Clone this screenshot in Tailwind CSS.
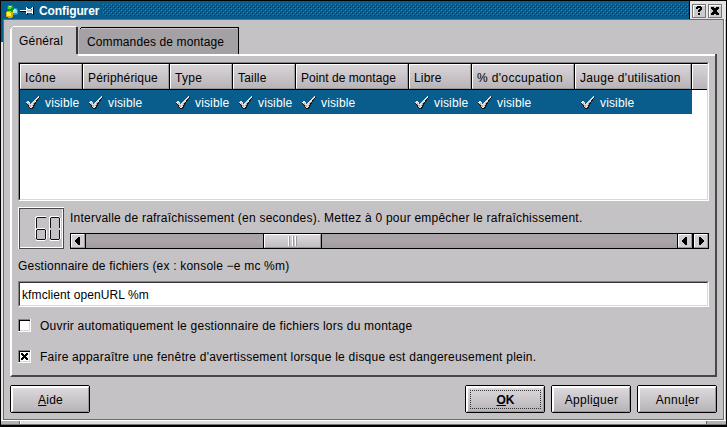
<!DOCTYPE html>
<html lang="fr">
<head>
<meta charset="utf-8">
<title>Configurer</title>
<script src="https://cdn.jsdelivr.net/npm/@tailwindcss/browser@4"></script>
</head>
<body class="w-[727px] h-[427px] overflow-hidden bg-black text-black font-['Liberation_Sans',Arial,sans-serif] text-[12px] leading-[14px] whitespace-nowrap cursor-default">
<svg class="hidden" shape-rendering="crispEdges">
  <symbol id="check" viewBox="0 0 15 15">
    <path d="M1 8h4v2h2V8h1V7h1V5h1V4h1V3h1V2h1V1h1v1h1v1h-1v1h-1v2h-1v1h-1v2h-1v2H9v2H8v1H5v-1H4v-1H3v-2H2V9H1z" fill="#181818"/>
    <path d="M1 7h1V6h2v1h1v2h1V8h1V7h1V6h1V5h1V4h1V3h1V2h1V1h1v2h-1v1h-1v1h-1v2h-1v1H9v2H8v2H7v1H5v-1H4v-2H3V9H2V8H1z" fill="#e2dee2"/>
    <path d="M3 8h1v2h2v2H5v-1H4v-1H3zM9 7h1v1H9v2H8v1H7v-1h1V8h1z" fill="#b0aab0"/>
  </symbol>
</svg>
<div class="w-[727px] h-[427px] flex flex-col border-t border-l border-r border-black">
  <!-- title bar -->
  <header class="h-[18px] flex shrink-0 bg-[#085d8c] text-white">
    <div class="w-[37px] flex shrink-0">
      <svg class="w-[37px] h-[18px]" viewBox="1 1 37 18" shape-rendering="crispEdges">
        <path d="M13 8h4v1h1v5h-1v1h-5v-1h-1v-3h2z" fill="#2898b8"/><path d="M13 9h3v1h1v3h-5v-1h1z" fill="#90e4f8"/><path d="M13 9h2v2h-2z" fill="#e0ffff"/>
        <path d="M8 5h5v1h1v4h-1v1H8v-1H7V6h1z" fill="#109820"/><path d="M8 6h4v2h-1v1H8z" fill="#48d848"/><path d="M9 6h2v1H9z" fill="#c0ffb0"/>
        <path d="M7 11h4v1h2v5h-1v1H8v-1H6v-5h1z" fill="#d8b000"/><path d="M7 12h3v1h1v3H7z" fill="#fff040"/>
        <path d="M20 11h7v1h-7zM27 7h1v8h-1zM28 12h5v1h-5zM33 7h1v8h-1z" fill="#000"/>
        <path d="M20 10h6v1h-6zM26 7h1v7h-1zM32 7h1v7h-1zM27 8h1v1h-1zM31 8h1v1h-1zM28 9h3v1h-3zM27 12h5v1h-5z" fill="#fff"/><path d="M27 9h1v3h-1zM28 10h4v2h-4z" fill="#c0c0c0"/>
      </svg>
    </div>
    <h1 class="pl-[1px] pt-[3px] w-[65px] shrink-0 font-bold tracking-[-0.1px]">Configurer</h1>
    <svg class="mt-[3px] w-[586px] h-[12px] shrink-0" shape-rendering="crispEdges"><defs><pattern id="grip" width="4" height="4" patternUnits="userSpaceOnUse"><path d="M0 0h1v1H0zM2 2h1v1H2z" fill="#2f8dc0"/><path d="M1 1h1v1H1zM3 3h1v1H3z" fill="#003858"/></pattern></defs><rect width="586" height="12" fill="url(#grip)"/></svg>
    <div class="flex grow gap-[2px] bg-[#e4e2e4] border-l border-black pt-[3px] pl-[2px]">
      <svg class="w-[14px] h-[14px]" viewBox="0 0 14 14" shape-rendering="crispEdges"><path d="M0 0h14v14H0z" fill="#777"/><path d="M1 1h12v12H1z" fill="#fff"/><path d="M2 2h11v11H2z" fill="#ccc9cc"/><path d="M4 4V3h1V2h4v1h1v3H9v1H8v1H6V6h1V5h1V4H6v1H4zM6 9h2v2H6z"/></svg>
      <svg class="w-[14px] h-[14px]" viewBox="0 0 14 14" shape-rendering="crispEdges"><path d="M0 0h14v14H0z" fill="#777"/><path d="M1 1h12v12H1z" fill="#fff"/><path d="M2 2h11v11H2z" fill="#ccc9cc"/><path d="M3 3h3v1h2V3h3v2h-1v1H9v2h1v1h1v2H8v-1H6v1H3V9h1V8h1V6H4V5H3z"/></svg>
    </div>
  </header>
  <div class="h-[401px] flex shrink-0">
    <div class="w-[2px] flex flex-col shrink-0"><div class="h-[23px] bg-[#085d8c]"></div><div class="grow bg-[#e4e4e4]"></div></div>
    <main class="w-[721px] border border-[#6c6c6c] bg-[#c5c2c5] pl-[6px] pt-[6px] flex flex-col shrink-0">
      <nav class="h-[28px] flex items-end shrink-0">
        <svg class="w-[230px] h-[28px] overflow-visible font-['Liberation_Sans',Arial,sans-serif] text-[12px]" shape-rendering="crispEdges">
          <path d="M69 28V4l3-3h156v27z" fill="#a4a1a4"/>
          <path d="M69 3l2-2h157v27" transform="translate(.5 .5)" fill="none" stroke="#000"/>
          <path d="M71 2.5h156" stroke="#c8c4c8"/>
          <path d="M67 1v27h1V2z" /><path d="M66 1h2v27h-2z" fill="#333"/>
          <path d="M0 30V3h1V2h1V1h1V0h63v1H3v1H2v28z" fill="#fff"/>
          <text x="9" y="19" class="tracking-[0.2px]">Général</text>
          <text x="77" y="20" class="tracking-[0.12px]">Commandes de montage</text>
        </svg>
      </nav>
      <section class="w-[707px] h-[323px] border-l-2 border-l-white border-r-2 border-b-2 border-r-[#484848] border-b-[#484848] shrink-0 flex flex-col">
        <div class="h-[2px] ml-[66px] bg-white shrink-0"></div>
        <div class="pl-[6px] pt-[6px] w-[697px] flex flex-col">
          <!-- column list -->
          <div class="w-[691px] h-[139px] bg-white border border-t-[#848484] border-l-[#848484] border-r-white border-b-white shrink-0">
            <div class="h-[137px] border border-t-black border-l-black border-r-[#dcd4dc] border-b-[#dcd4dc]">
              <div id="heads" class="h-[26px] flex border-b border-black"></div>
              <div id="cells" class="h-[24px] w-[672px] flex bg-[#085d8c] text-white"></div>
            </div>
          </div>
          <!-- refresh interval -->
          <div class="mt-[6px] flex h-[42px] shrink-0">
            <svg class="w-[46px] h-[42px] shrink-0" shape-rendering="crispEdges">
              <path d="M0 0h46v42H0z" fill="#484848"/><path d="M0 0h46v1H1v41H0z" fill="#fff"/><path d="M2 2h43v39H2z" fill="#fff"/><path d="M2 2h42v38H2z" fill="#c5c2c5"/>
              <g fill="none" stroke="#fff"><path d="M17.500 31V10M18 9.500h10M19 21.500h8M28.500 23v9M18 33.500h9M31.500 31V10M32 9.500h9M42.500 11v21M32 33.500h9"/></g>
              <g fill="none" stroke="#111"><path d="M18.500 11v10M18.500 23v9M19 10.500h9M19 22.500h8M27.500 23v9M19 32.500h8M32.500 11v10M32.500 23v9M33 10.500h8M41.500 11v10M41.500 23v9M33 32.500h8"/></g>
            </svg>
            <div class="pl-[6px] flex flex-col">
              <label class="h-[26px] pt-[4px] tracking-[0.23px]">Intervalle de rafraîchissement (en secondes). Mettez à 0 pour empêcher le rafraîchissement.</label>
              <div class="w-[639px] h-[16px] border border-black flex bg-linear-to-b from-[#a8a4a8] via-[#aca4a8] to-[#a09ca0]">
                <div class="w-[15px] border-r border-black"><svg class="size-[14px]" viewBox="0 0 14 14" shape-rendering="crispEdges"><path d="M0 0h14v14H0z" fill="#999"/><path d="M0 0h13v13H0z" fill="#fff"/><path d="M1 1h12v12H1z" fill="#d2ced2"/><path d="M4 6h1V5h1V4h1V3h2v8H7v-1H6V9H5V8H4z"/></svg></div>
                <div class="w-[177px]"></div>
                <div class="w-[59px] border-x border-black"><div class="h-[14px] border-t border-l border-t-white border-l-white border-r border-b border-r-[#999] border-b-[#999] bg-linear-to-b from-[#dcd8dc] to-[#c0bcc0] flex justify-center py-[1px]"><i class="w-[1px] bg-white"></i><i class="w-[1px] bg-[#999]"></i><i class="w-[1px] mr-[1px]"></i><i class="w-[1px] bg-white"></i><i class="w-[1px] mr-[1px] bg-[#999]"></i><i class="w-[1px] bg-white"></i><i class="w-[1px] bg-[#999]"></i></div></div>
                <div class="grow"></div>
                <div class="w-[16px] border-x border-black"><svg class="size-[14px]" viewBox="0 0 14 14" shape-rendering="crispEdges"><path d="M0 0h14v14H0z" fill="#999"/><path d="M0 0h13v13H0z" fill="#fff"/><path d="M1 1h12v12H1z" fill="#d2ced2"/><path d="M4 6h1V5h1V4h1V3h2v8H7v-1H6V9H5V8H4z"/></svg></div>
                <div class="w-[15px] border-l border-black"><svg class="size-[14px]" viewBox="0 0 14 14" shape-rendering="crispEdges"><path d="M0 0h14v14H0z" fill="#999"/><path d="M0 0h13v13H0z" fill="#fff"/><path d="M1 1h12v12H1z" fill="#d2ced2"/><path d="M10 6H9V5H8V4H7V3H5v8h2v-1h1V9h1V8h1z"/></svg></div>
              </div>
            </div>
          </div>
          <label class="mt-[10px] h-[22px] shrink-0 tracking-[0.2px]">Gestionnaire de fichiers (ex : konsole −e mc %m)</label>
          <div class="w-[691px] h-[26px] shrink-0 border border-t-[#848484] border-l-[#848484] border-r-white border-b-white"><div class="h-[24px] bg-white border border-t-[#333] border-l-[#333] border-r-[#dcd4dc] border-b-[#dcd4dc] pl-[2px] pt-[5px] tracking-[0.1px]">kfmclient openURL %m</div></div>
          <div class="mt-[12px] h-[13px] flex shrink-0">
            <svg class="size-[13px] mr-[9px]" viewBox="0 0 13 13" shape-rendering="crispEdges"><path d="M0 0h13v13H0z" fill="#fff"/><path d="M0 0h12v1H1v11H0z" fill="#848484"/><path d="M1 1h11v1H2v10H1z"/><path d="M11 2h1v10H2v-1h9z" fill="#dcd4dc"/></svg>
            <span class="tracking-[0.225px]">Ouvrir automatiquement le gestionnaire de fichiers lors du montage</span>
          </div>
          <div class="mt-[18px] h-[13px] flex shrink-0">
            <svg class="size-[13px] mr-[9px]" viewBox="0 0 13 13" shape-rendering="crispEdges"><path d="M0 0h13v13H0z" fill="#fff"/><path d="M0 0h12v1H1v11H0z" fill="#848484"/><path d="M1 1h11v1H2v10H1z"/><path d="M11 2h1v10H2v-1h9z" fill="#dcd4dc"/><path d="M3 3h2v1h1v1h1V4h1V3h2v2H9v1H8v1h1v1h1v2H8V9H7V8H6v1H5v1H3V8h1V7h1V6H4V5H3z"/></svg>
            <span class="tracking-[0.24px]">Faire apparaître une fenêtre d'avertissement lorsque le disque est dangereusement plein.</span>
          </div>
        </div>
      </section>
      <footer class="mt-[8px] w-[707px] h-[28px] flex gap-[6px] shrink-0">
        <button class="w-[80px] border border-black rounded-[2px] mr-auto"><span class="flex h-[26px] items-center justify-center border-t-2 border-l-2 border-t-white border-l-white border-r border-b border-r-[#999] border-b-[#999] bg-linear-to-b from-[#dcd8dc] to-[#b8b4b8] tracking-[0.2px]"><u>A</u>ide</span></button>
        <button class="w-[80px] border border-black rounded-[2px]"><span class="flex h-[26px] p-[2px] border-t-2 border-l-2 border-t-white border-l-white border-r border-b border-r-[#999] border-b-[#999] bg-linear-to-b from-[#dcd8dc] to-[#b8b4b8] font-bold"><span class="grow flex items-center justify-center border border-dotted border-[#333]"><u>O</u>K</span></span></button>
        <button class="w-[80px] border border-black rounded-[2px]"><span class="flex h-[26px] items-center justify-center border-t-2 border-l-2 border-t-white border-l-white border-r border-b border-r-[#999] border-b-[#999] bg-linear-to-b from-[#dcd8dc] to-[#b8b4b8] tracking-[0.3px]">Appli<u>q</u>uer</span></button>
        <button class="w-[80px] border border-black rounded-[2px]"><span class="flex h-[26px] items-center justify-center border-t-2 border-l-2 border-t-white border-l-white border-r border-b border-r-[#999] border-b-[#999] bg-linear-to-b from-[#dcd8dc] to-[#b8b4b8] tracking-[0.3px]">Annu<u>l</u>er</span></button>
      </footer>
    </main>
    <div class="w-[2px] bg-[#c0c0c0] border-l border-white"></div>
  </div>
  <!-- resize handle -->
  <div class="h-[5px] flex shrink-0 border-t border-t-white border-b border-b-[#777]">
    <div class="w-[19px] bg-[#b0b4b0] border-r border-[#666]"></div><div class="grow bg-[#dedede] border-l border-white"></div><div class="w-[20px] bg-[#b0b4b0] border-l border-[#666]"></div>
  </div>
</div>
<script>
// label, column width, letter spacing
const columns = [["Icône",63,.3],["Périphérique",87,.15],["Type",63,.3],["Taille",63,.2],["Point de montage",113,.05],["Libre",63,.2],["% d'occupation",103,.35],["Jauge d'utilisation",117,.3]];
document.getElementById("heads").innerHTML = columns.map(([t,w,s]) => `<div class="shrink-0 border-r border-black" style="width:${w}px"><div class="h-[25px] border-t border-l border-t-white border-l-white border-r border-b border-r-[#999] border-b-[#999] bg-linear-to-b from-[#d8d4d8] to-[#b8b4b8] pl-[4px] pt-[6px]" style="letter-spacing:${s}px">${t}</div></div>`).join("") + `<div class="grow h-[25px] border-t border-l border-white bg-linear-to-b from-[#d8d4d8] to-[#b8b4b8]"></div>`;
document.getElementById("cells").innerHTML = columns.map(([t,w]) => `<div class="shrink-0 flex pl-[5px] pt-[6px]" style="width:${w}px"><svg class="size-[15px] mr-[5px] -mt-[1px]"><use href="#check"/></svg><span class="tracking-[0.15px]">visible</span></div>`).join("");
</script>
</body>
</html>
